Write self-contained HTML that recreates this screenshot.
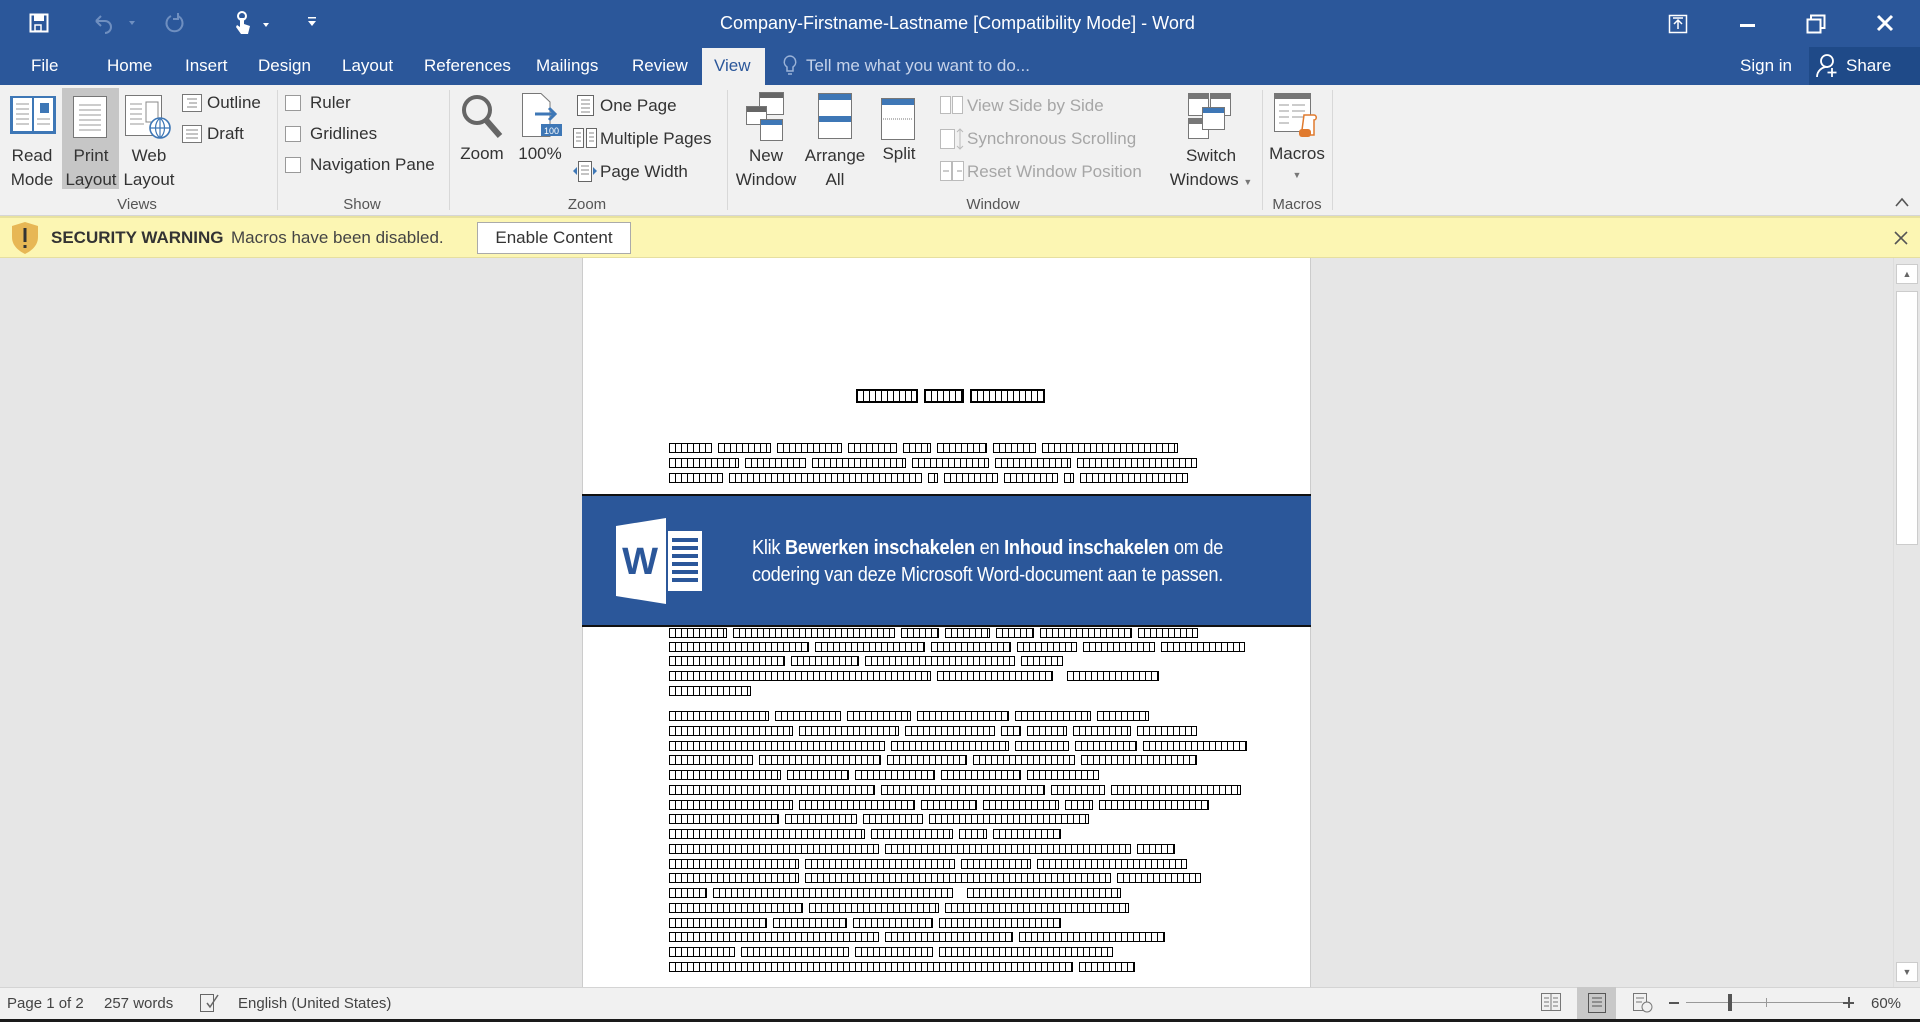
<!DOCTYPE html>
<html><head><meta charset="utf-8"><style>
*{margin:0;padding:0;box-sizing:border-box}
body{width:1920px;height:1022px;overflow:hidden;position:relative;font-family:"Liberation Sans",sans-serif;background:#e6e6e6;color:#262626}
.a{position:absolute;white-space:nowrap}
#title{left:0;top:0;width:1920px;height:85px;background:#2b579a}
.t{color:#fff;font-size:17px}
.rib{left:0;top:85px;width:1920px;height:131px;background:#f1f1f1;border-bottom:1px solid #d6d6d6}
.r{font-size:17px;color:#333}
.lbl{font-size:15px;color:#555}
.sep{position:absolute;top:90px;width:1px;height:120px;background:#d8d8d8}
.cb{position:absolute;width:16px;height:16px;border:1px solid #999;background:#fff}
.g{color:#a6a6a6}
.w{display:inline-block;height:10px;border:1px solid #000;background:repeating-linear-gradient(90deg,#fff 0 5px,#000 5px 6px);margin-right:6px;vertical-align:top}
.ln{position:absolute;left:669px;height:11px;white-space:nowrap;font-size:0}
.c{text-align:center}
</style></head><body>
<div class="a" id="title"></div>
<svg class="a" style="left:29px;top:13px" width="20" height="20" viewBox="0 0 20 20"><rect x="1.5" y="1.5" width="17" height="17" fill="none" stroke="#fff" stroke-width="2"/><rect x="5" y="2" width="10" height="6" fill="#fff"/><rect x="6" y="12" width="6" height="6" fill="none" stroke="#fff" stroke-width="1.5"/></svg>
<svg class="a" style="left:92px;top:12px" width="45" height="22" viewBox="0 0 45 22"><path d="M4 9 L9 4 M4 9 L9 14 M4 9 H13 A6 6 0 0 1 13 21" fill="none" stroke="#6f8fc0" stroke-width="2"/><path d="M37 9 l3 4 l3 -4z" fill="#6f8fc0"/></svg>
<svg class="a" style="left:163px;top:11px" width="22" height="24" viewBox="0 0 22 24"><path d="M8 5 A8 8 0 1 0 15 5" fill="none" stroke="#6f8fc0" stroke-width="2"/><path d="M15 2 v6 h-5" fill="none" stroke="#6f8fc0" stroke-width="2"/></svg>
<svg class="a" style="left:232px;top:10px" width="40" height="28" viewBox="0 0 40 28"><circle cx="10" cy="6" r="4" fill="none" stroke="#fff" stroke-width="2"/><path d="M8 8 v9 l-3 -2 l-1 2 l5 7 h7 l2 -8 l-6 -2 v-6z" fill="#fff"/><path d="M31 13 l3 4 l3 -4z" fill="#fff"/></svg>
<svg class="a" style="left:306px;top:15px" width="12" height="14" viewBox="0 0 12 14"><rect x="2" y="2" width="8" height="1.5" fill="#fff"/><path d="M2 6 l4 5 l4 -5z" fill="#fff"/></svg>
<div class="a t" style="left:720px;top:13px;font-size:18px">Company-Firstname-Lastname [Compatibility Mode] - Word</div>
<svg class="a" style="left:1667px;top:13px" width="22" height="22" viewBox="0 0 22 22"><rect x="2.5" y="2.5" width="17" height="17" fill="none" stroke="#fff" stroke-width="1.5"/><path d="M11 16 V7 M7 11 l4 -4 l4 4 M6 5h10" fill="none" stroke="#fff" stroke-width="1.5"/></svg>
<div class="a" style="left:1740px;top:24px;width:15px;height:3px;background:#fff"></div>
<svg class="a" style="left:1805px;top:13px" width="22" height="22" viewBox="0 0 22 22"><rect x="2.5" y="6.5" width="13" height="13" fill="none" stroke="#fff" stroke-width="2"/><path d="M6 6 V2.5 H19.5 V15 H16" fill="none" stroke="#fff" stroke-width="2"/></svg>
<svg class="a" style="left:1876px;top:14px" width="18" height="18" viewBox="0 0 18 18"><path d="M2 2 L16 16 M16 2 L2 16" stroke="#fff" stroke-width="3"/></svg>
<div class="a t" style="left:31px;top:56px">File</div>
<div class="a t" style="left:107px;top:56px">Home</div>
<div class="a t" style="left:185px;top:56px">Insert</div>
<div class="a t" style="left:258px;top:56px">Design</div>
<div class="a t" style="left:342px;top:56px">Layout</div>
<div class="a t" style="left:424px;top:56px">References</div>
<div class="a t" style="left:536px;top:56px">Mailings</div>
<div class="a t" style="left:632px;top:56px">Review</div>
<div class="a" style="left:702px;top:48px;width:63px;height:38px;background:#f1f1f1"></div>
<div class="a" style="left:714px;top:56px;font-size:17px;color:#2b579a">View</div>
<svg class="a" style="left:783px;top:55px" width="14" height="22" viewBox="0 0 14 22"><path d="M7 1 A6 6 0 0 0 4 12 V16 H10 V12 A6 6 0 0 0 7 1z M5 19 H9" fill="none" stroke="#9bb3d8" stroke-width="1.5"/></svg>
<div class="a t" style="left:806px;top:56px;color:#c6d3ea">Tell me what you want to do...</div>
<div class="a t" style="left:1740px;top:56px">Sign in</div>
<div class="a" style="left:1809px;top:47px;width:111px;height:38px;background:#1f4a88"></div>
<svg class="a" style="left:1816px;top:53px" width="24" height="26" viewBox="0 0 24 26"><circle cx="11" cy="8" r="6" fill="none" stroke="#fff" stroke-width="1.8"/><path d="M1 24 A10 10 0 0 1 12 14 M16 15 v9 M11.5 19.5 h9" fill="none" stroke="#fff" stroke-width="1.8"/></svg>
<div class="a t" style="left:1846px;top:56px">Share</div>
<div class="a rib"></div>
<div class="sep" style="left:277px"></div><div class="sep" style="left:449px"></div><div class="sep" style="left:727px"></div><div class="sep" style="left:1262px"></div><div class="sep" style="left:1332px"></div>
<div class="a" style="left:62px;top:88px;width:57px;height:101px;background:#c6c6c6"></div>
<svg class="a" style="left:9px;top:94px" width="48" height="42" viewBox="0 0 48 42"><rect x="1" y="2" width="46" height="38" fill="#3e77b6"/><rect x="4" y="4" width="19" height="33" fill="#fff"/><rect x="25" y="4" width="19" height="33" fill="#fff"/><path d="M7 10h13M7 15h13M7 20h13M7 25h13M7 30h13M28 25h13M28 30h13" stroke="#999"/><rect x="31" y="9" width="9" height="10" fill="#3e77b6"/></svg>
<svg class="a" style="left:72px;top:95px" width="36" height="44" viewBox="0 0 36 44"><rect x="1.5" y="1.5" width="33" height="41" fill="#fff" stroke="#777"/><path d="M7 10h22M7 15h22M7 20h22M7 25h22M7 30h22M7 35h22" stroke="#999"/></svg>
<svg class="a" style="left:124px;top:94px" width="48" height="46" viewBox="0 0 48 46"><rect x="1.5" y="1.5" width="36" height="40" fill="#fff" stroke="#777"/><path d="M6 10h12M6 15h12M6 20h12M6 25h12M6 30h14" stroke="#999"/><rect x="22" y="8" width="12" height="20" fill="#fff" stroke="#888"/><circle cx="36" cy="34" r="10" fill="#fff" stroke="#3e77b6" stroke-width="1.6"/><path d="M26 34h20M36 24v20M36 24c-6 5 -6 15 0 20M36 24c6 5 6 15 0 20" fill="none" stroke="#3e77b6" stroke-width="1.2"/></svg>
<div class="a r c" style="left:0;top:144px;width:64px;line-height:24px">Read<br>Mode</div>
<div class="a r c" style="left:60px;top:144px;width:62px;line-height:24px">Print<br>Layout</div>
<div class="a r c" style="left:118px;top:144px;width:62px;line-height:24px">Web<br>Layout</div>
<svg class="a" style="left:182px;top:94px" width="20" height="18" viewBox="0 0 20 18"><rect x="0.5" y="0.5" width="19" height="17" fill="#fff" stroke="#777"/><path d="M5 5h10M7 9h8M5 13h10" stroke="#888"/></svg>
<svg class="a" style="left:182px;top:125px" width="20" height="18" viewBox="0 0 20 18"><rect x="0.5" y="0.5" width="19" height="17" fill="#fff" stroke="#777"/><path d="M4 5h12M4 9h12M4 13h12" stroke="#888"/></svg>
<div class="a r" style="left:207px;top:93px">Outline</div>
<div class="a r" style="left:207px;top:124px">Draft</div>
<div class="a lbl c" style="left:100px;top:196px;width:74px">Views</div>
<div class="cb" style="left:285px;top:95px"></div><div class="cb" style="left:285px;top:126px"></div><div class="cb" style="left:285px;top:157px"></div>
<div class="a r" style="left:310px;top:93px">Ruler</div>
<div class="a r" style="left:310px;top:124px">Gridlines</div>
<div class="a r" style="left:310px;top:155px">Navigation Pane</div>
<div class="a lbl c" style="left:330px;top:196px;width:64px">Show</div>
<svg class="a" style="left:460px;top:93px" width="44" height="46" viewBox="0 0 44 46"><circle cx="17" cy="17" r="13" fill="none" stroke="#666" stroke-width="4"/><path d="M26 27 L40 43" stroke="#666" stroke-width="6"/></svg>
<div class="a r c" style="left:452px;top:144px;width:60px">Zoom</div>
<svg class="a" style="left:521px;top:92px" width="42" height="46" viewBox="0 0 42 46"><path d="M1.5 1.5 H20 L29 10 V44.5 H1.5z" fill="#fff" stroke="#777"/><path d="M14 22h20M28 16l6 6l-6 6" fill="none" stroke="#3e77b6" stroke-width="3"/><rect x="20" y="32" width="21" height="12" fill="#3e77b6"/><text x="30.5" y="42" fill="#fff" font-size="9" text-anchor="middle" font-family="Liberation Sans">100</text></svg>
<div class="a r c" style="left:512px;top:144px;width:56px">100%</div>
<svg class="a" style="left:577px;top:95px" width="17" height="21" viewBox="0 0 17 21"><rect x="0.5" y="0.5" width="16" height="20" fill="#fff" stroke="#666"/><path d="M4 5h9M4 9h9M4 13h9M4 17h9" stroke="#888"/></svg>
<svg class="a" style="left:573px;top:128px" width="24" height="20" viewBox="0 0 24 20"><rect x="0.5" y="0.5" width="10" height="19" fill="#fff" stroke="#666"/><rect x="13.5" y="0.5" width="10" height="19" fill="#fff" stroke="#666"/><path d="M3 5h5M3 9h5M3 13h5M16 5h5M16 9h5M16 13h5" stroke="#888"/></svg>
<svg class="a" style="left:573px;top:161px" width="24" height="21" viewBox="0 0 24 21"><rect x="5.5" y="0.5" width="13" height="20" fill="#fff" stroke="#666"/><path d="M8 5h8M8 9h8M8 13h8" stroke="#888"/><path d="M0 10l4-4v8zM24 10l-4-4v8z" fill="#3e77b6"/></svg>
<div class="a r" style="left:600px;top:96px">One Page</div>
<div class="a r" style="left:600px;top:129px">Multiple Pages</div>
<div class="a r" style="left:600px;top:162px">Page Width</div>
<div class="a lbl c" style="left:557px;top:196px;width:60px">Zoom</div>
<svg class="a" style="left:745px;top:92px" width="42" height="50" viewBox="0 0 42 50"><rect x="14.5" y="0.5" width="24" height="22" fill="#fff" stroke="#777"/><rect x="15" y="1" width="23" height="5" fill="#666"/><rect x="1.5" y="14.5" width="20" height="18" fill="#fff" stroke="#777"/><rect x="2" y="15" width="19" height="5" fill="#666"/><rect x="15.5" y="27.5" width="22" height="21" fill="#fff" stroke="#777"/><rect x="16" y="28" width="21" height="5" fill="#3e77b6"/></svg>
<svg class="a" style="left:818px;top:93px" width="34" height="46" viewBox="0 0 34 46"><rect x="0.5" y="0.5" width="33" height="45" fill="#fff" stroke="#777"/><rect x="1" y="1" width="32" height="6" fill="#3e77b6"/><rect x="1" y="23" width="32" height="6" fill="#3e77b6"/></svg>
<svg class="a" style="left:881px;top:98px" width="34" height="42" viewBox="0 0 34 42"><rect x="0.5" y="0.5" width="33" height="41" fill="#fff" stroke="#777"/><rect x="1" y="1" width="32" height="6" fill="#3e77b6"/><path d="M2 21h30" stroke="#777" stroke-dasharray="1 1"/></svg>
<div class="a r c" style="left:730px;top:144px;width:72px;line-height:24px">New<br>Window</div>
<div class="a r c" style="left:799px;top:144px;width:72px;line-height:24px">Arrange<br>All</div>
<div class="a r c" style="left:876px;top:144px;width:46px">Split</div>
<svg class="a g" style="left:940px;top:96px" width="24" height="18" viewBox="0 0 24 18"><rect x="0.5" y="0.5" width="10" height="17" fill="#fff" stroke="#bbb"/><rect x="12.5" y="0.5" width="10" height="17" fill="#fff" stroke="#bbb"/></svg>
<svg class="a" style="left:940px;top:128px" width="24" height="22" viewBox="0 0 24 22"><rect x="0.5" y="1.5" width="14" height="19" fill="#fff" stroke="#bbb"/><path d="M20 1v20M17 4l3-3l3 3M17 18l3 3l3-3" fill="none" stroke="#bbb"/></svg>
<svg class="a" style="left:940px;top:161px" width="24" height="20" viewBox="0 0 24 20"><rect x="0.5" y="0.5" width="11" height="19" fill="#fff" stroke="#bbb"/><rect x="12.5" y="0.5" width="11" height="19" fill="#fff" stroke="#bbb"/><path d="M3 10h6M17 10h5" stroke="#999"/></svg>
<div class="a r g" style="left:967px;top:96px">View Side by Side</div>
<div class="a r g" style="left:967px;top:129px">Synchronous Scrolling</div>
<div class="a r g" style="left:967px;top:162px">Reset Window Position</div>
<div class="a lbl c" style="left:958px;top:196px;width:70px">Window</div>
<svg class="a" style="left:1188px;top:93px" width="44" height="46" viewBox="0 0 44 46"><rect x="0.5" y="0.5" width="20" height="22" fill="#fff" stroke="#777"/><rect x="1" y="1" width="19" height="5" fill="#777"/><rect x="22.5" y="0.5" width="20" height="22" fill="#fff" stroke="#777"/><rect x="23" y="1" width="19" height="5" fill="#777"/><rect x="0.5" y="25.5" width="20" height="20" fill="#fff" stroke="#777"/><rect x="1" y="26" width="19" height="5" fill="#777"/><rect x="14.5" y="14.5" width="22" height="22" fill="#fff" stroke="#777"/><rect x="15" y="15" width="21" height="5" fill="#3e77b6"/></svg>
<div class="a r c" style="left:1165px;top:144px;width:92px;line-height:24px">Switch<br>Windows <span style="font-size:9px;color:#777">▼</span></div>
<svg class="a" style="left:1274px;top:93px" width="44" height="46" viewBox="0 0 44 46"><rect x="0.5" y="0.5" width="36" height="38" fill="#fff" stroke="#777"/><rect x="1" y="1" width="35" height="5" fill="#777"/><path d="M5 12h10M18 12h13M5 18h10M18 18h13M5 24h10M18 24h13M5 30h10" stroke="#999"/><path d="M30 22h10c3 0 3 5 0 5v15h-12c-3 0-3-5 0-5z" fill="#fff" stroke="#e07a2e" stroke-width="1.5"/><rect x="25" y="36" width="12" height="8" rx="3" fill="#e07a2e"/></svg>
<div class="a r c" style="left:1260px;top:144px;width:74px">Macros</div>
<div class="a c" style="left:1290px;top:170px;width:14px;font-size:9px;color:#777">▼</div>
<div class="a lbl c" style="left:1262px;top:196px;width:70px">Macros</div>
<svg class="a" style="left:1895px;top:197px" width="14" height="10" viewBox="0 0 14 10"><path d="M1 9 L7 2 L13 9" fill="none" stroke="#555" stroke-width="1.6"/></svg>
<div class="a" style="left:0;top:216px;width:1920px;height:42px;background:#fcf6b3;border-top:2px solid #e8e2a0;border-bottom:1px solid #e6dfa0"></div>
<svg class="a" style="left:10px;top:221px" width="30" height="34" viewBox="0 0 30 34"><path d="M15 1 L28 5 V16 C28 25 21 30 15 33 C9 30 2 25 2 16 V5z" fill="#e7b755"/><rect x="13.5" y="7" width="3" height="14" fill="#333"/><rect x="13.5" y="24" width="3" height="3" fill="#333"/></svg>
<div class="a" style="left:51px;top:228px;font-size:17px;font-weight:bold;color:#333">SECURITY WARNING</div>
<div class="a" style="left:231px;top:228px;font-size:17px;color:#444">Macros have been disabled.</div>
<div class="a" style="left:477px;top:222px;width:154px;height:32px;background:#fff;border:1px solid #aaa;font-size:17px;color:#333;text-align:center;line-height:30px">Enable Content</div>
<svg class="a" style="left:1894px;top:231px" width="14" height="14" viewBox="0 0 14 14"><path d="M1 1L13 13M13 1L1 13" stroke="#555" stroke-width="1.6"/></svg>
<div class="a" style="left:582px;top:258px;width:729px;height:729px;background:#fff;border-left:1px solid #ccc;border-right:1px solid #ccc"></div>
<div class="ln" style="left:856px;top:389px;height:14px"><span class="w" style="width:62px;height:14px;border-width:2px"></span><span class="w" style="width:40px;height:14px;border-width:2px"></span><span class="w" style="width:75px;height:14px;border-width:2px"></span></div>
<div class="ln" style="top:443px"><span class="w" style="width:43px"></span><span class="w" style="width:53px"></span><span class="w" style="width:65px"></span><span class="w" style="width:49px"></span><span class="w" style="width:28px"></span><span class="w" style="width:50px"></span><span class="w" style="width:43px"></span><span class="w" style="width:136px"></span></div>
<div class="ln" style="top:458px"><span class="w" style="width:70px"></span><span class="w" style="width:61px"></span><span class="w" style="width:94px"></span><span class="w" style="width:77px"></span><span class="w" style="width:76px"></span><span class="w" style="width:120px"></span></div>
<div class="ln" style="top:473px"><span class="w" style="width:54px"></span><span class="w" style="width:193px"></span><span class="w" style="width:10px"></span><span class="w" style="width:54px"></span><span class="w" style="width:54px"></span><span class="w" style="width:10px"></span><span class="w" style="width:108px"></span></div>
<div class="a" style="left:582px;top:494px;width:729px;height:133px;background:#2b579a;border-top:2px solid #111;border-bottom:2px solid #111"></div>
<svg class="a" style="left:616px;top:518px" width="88" height="86" viewBox="0 0 88 86"><path d="M0 8 L50 0 V86 L0 78z" fill="#fff"/><rect x="52" y="13" width="34" height="60" fill="#fff"/><path d="M56 22h26M56 30h26M56 38h26M56 46h26M56 54h26M56 62h26" stroke="#2b579a" stroke-width="4"/><text x="24" y="56" fill="#2b579a" font-size="38" font-weight="bold" text-anchor="middle" font-family="Liberation Sans">W</text></svg>
<div class="a" style="left:752px;top:535px;font-family:'Liberation Sans Narrow','Liberation Sans',sans-serif;font-size:20px;color:#fff;line-height:27px;letter-spacing:-0.3px;transform:scaleX(0.91);transform-origin:0 0">Klik <b>Bewerken inschakelen</b> en <b>Inhoud inschakelen</b> om de<br>codering van deze Microsoft Word-document aan te passen.</div>
<div class="ln" style="top:628px"><span class="w" style="width:58px"></span><span class="w" style="width:162px"></span><span class="w" style="width:38px"></span><span class="w" style="width:45px"></span><span class="w" style="width:38px"></span><span class="w" style="width:92px"></span><span class="w" style="width:60px"></span></div>
<div class="ln" style="top:642px"><span class="w" style="width:140px"></span><span class="w" style="width:110px"></span><span class="w" style="width:80px"></span><span class="w" style="width:60px"></span><span class="w" style="width:72px"></span><span class="w" style="width:84px"></span></div>
<div class="ln" style="top:656px"><span class="w" style="width:116px"></span><span class="w" style="width:68px"></span><span class="w" style="width:150px"></span><span class="w" style="width:42px"></span></div>
<div class="ln" style="top:671px"><span class="w" style="width:262px"></span><span class="w" style="width:116px"></span><span class="w" style="width:92px;margin-left:8px"></span></div>
<div class="ln" style="top:686px"><span class="w" style="width:82px"></span></div>
<div class="ln" style="top:711px"><span class="w" style="width:100px"></span><span class="w" style="width:66px"></span><span class="w" style="width:64px"></span><span class="w" style="width:92px"></span><span class="w" style="width:76px"></span><span class="w" style="width:52px"></span></div>
<div class="ln" style="top:726px"><span class="w" style="width:124px"></span><span class="w" style="width:100px"></span><span class="w" style="width:90px"></span><span class="w" style="width:20px"></span><span class="w" style="width:40px"></span><span class="w" style="width:58px"></span><span class="w" style="width:60px"></span></div>
<div class="ln" style="top:741px"><span class="w" style="width:216px"></span><span class="w" style="width:118px"></span><span class="w" style="width:54px"></span><span class="w" style="width:62px"></span><span class="w" style="width:104px"></span></div>
<div class="ln" style="top:755px"><span class="w" style="width:84px"></span><span class="w" style="width:122px"></span><span class="w" style="width:80px"></span><span class="w" style="width:102px"></span><span class="w" style="width:116px"></span></div>
<div class="ln" style="top:770px"><span class="w" style="width:112px"></span><span class="w" style="width:62px"></span><span class="w" style="width:80px"></span><span class="w" style="width:80px"></span><span class="w" style="width:72px"></span></div>
<div class="ln" style="top:785px"><span class="w" style="width:206px"></span><span class="w" style="width:164px"></span><span class="w" style="width:54px"></span><span class="w" style="width:130px"></span></div>
<div class="ln" style="top:800px"><span class="w" style="width:124px"></span><span class="w" style="width:116px"></span><span class="w" style="width:56px"></span><span class="w" style="width:76px"></span><span class="w" style="width:28px"></span><span class="w" style="width:110px"></span></div>
<div class="ln" style="top:814px"><span class="w" style="width:110px"></span><span class="w" style="width:72px"></span><span class="w" style="width:60px"></span><span class="w" style="width:160px"></span></div>
<div class="ln" style="top:829px"><span class="w" style="width:196px"></span><span class="w" style="width:82px"></span><span class="w" style="width:28px"></span><span class="w" style="width:68px"></span></div>
<div class="ln" style="top:844px"><span class="w" style="width:210px"></span><span class="w" style="width:246px"></span><span class="w" style="width:38px"></span></div>
<div class="ln" style="top:859px"><span class="w" style="width:130px"></span><span class="w" style="width:150px"></span><span class="w" style="width:70px"></span><span class="w" style="width:150px"></span></div>
<div class="ln" style="top:873px"><span class="w" style="width:130px"></span><span class="w" style="width:306px"></span><span class="w" style="width:84px"></span></div>
<div class="ln" style="top:888px"><span class="w" style="width:38px"></span><span class="w" style="width:240px"></span><span class="w" style="width:154px;margin-left:8px"></span></div>
<div class="ln" style="top:903px"><span class="w" style="width:134px"></span><span class="w" style="width:130px"></span><span class="w" style="width:184px"></span></div>
<div class="ln" style="top:918px"><span class="w" style="width:98px"></span><span class="w" style="width:74px"></span><span class="w" style="width:80px"></span><span class="w" style="width:122px"></span></div>
<div class="ln" style="top:932px"><span class="w" style="width:210px"></span><span class="w" style="width:128px"></span><span class="w" style="width:146px"></span></div>
<div class="ln" style="top:947px"><span class="w" style="width:66px"></span><span class="w" style="width:108px"></span><span class="w" style="width:78px"></span><span class="w" style="width:174px"></span></div>
<div class="ln" style="top:962px"><span class="w" style="width:404px"></span><span class="w" style="width:56px"></span></div>
<div class="a" style="left:1893px;top:258px;width:27px;height:729px;background:#e6e6e6;border-left:1px solid #ddd"></div>
<div class="a" style="left:1896px;top:264px;width:22px;height:20px;background:#fff;border:1px solid #ccc;font-size:9px;text-align:center;color:#666;line-height:18px">▲</div>
<div class="a" style="left:1896px;top:291px;width:22px;height:254px;background:#fff;border:1px solid #ccc"></div>
<div class="a" style="left:1896px;top:962px;width:22px;height:20px;background:#fff;border:1px solid #ccc;font-size:9px;text-align:center;color:#666;line-height:18px">▼</div>
<div class="a" style="left:0;top:987px;width:1920px;height:32px;background:#f1f1f1;border-top:1px solid #d4d4d4"></div>
<div class="a" style="left:0;top:1019px;width:1920px;height:3px;background:#1a1a1a"></div>
<div class="a" style="left:7px;top:995px;font-size:15px;color:#444">Page 1 of 2</div>
<div class="a" style="left:104px;top:995px;font-size:15px;color:#444">257 words</div>
<svg class="a" style="left:199px;top:993px" width="22" height="20" viewBox="0 0 22 20"><rect x="1.5" y="1.5" width="13" height="17" fill="none" stroke="#666"/><path d="M8 10l3 4l8-12" fill="none" stroke="#666" stroke-width="1.5"/></svg>
<div class="a" style="left:238px;top:995px;font-size:15px;color:#444">English (United States)</div>
<svg class="a" style="left:1541px;top:993px" width="20" height="18" viewBox="0 0 20 18"><rect x="0.5" y="0.5" width="19" height="17" fill="none" stroke="#777"/><path d="M10 0v18M3 5h5M3 9h5M3 13h5M12 5h5M12 9h5M12 13h5" stroke="#777"/></svg>
<div class="a" style="left:1577px;top:987px;width:39px;height:32px;background:#c8c8c8"></div>
<svg class="a" style="left:1588px;top:993px" width="18" height="20" viewBox="0 0 18 20"><rect x="0.5" y="0.5" width="17" height="19" fill="none" stroke="#555"/><path d="M4 5h10M4 9h10M4 13h10" stroke="#555"/></svg>
<svg class="a" style="left:1633px;top:993px" width="20" height="20" viewBox="0 0 20 20"><rect x="0.5" y="0.5" width="13" height="17" fill="none" stroke="#777"/><path d="M3 5h8M3 9h6" stroke="#777"/><circle cx="14" cy="14" r="5" fill="#f1f1f1" stroke="#777"/></svg>
<div class="a" style="left:1669px;top:1002px;width:10px;height:2px;background:#555"></div>
<div class="a" style="left:1686px;top:1002px;width:160px;height:1px;background:#999"></div>
<div class="a" style="left:1728px;top:994px;width:4px;height:17px;background:#555"></div>
<div class="a" style="left:1766px;top:998px;width:1px;height:9px;background:#999"></div>
<div class="a" style="left:1843px;top:1002px;width:11px;height:2px;background:#555"></div>
<div class="a" style="left:1847.5px;top:997px;width:2px;height:11px;background:#555"></div>
<div class="a" style="left:1871px;top:995px;font-size:15px;color:#444">60%</div>
</body></html>
